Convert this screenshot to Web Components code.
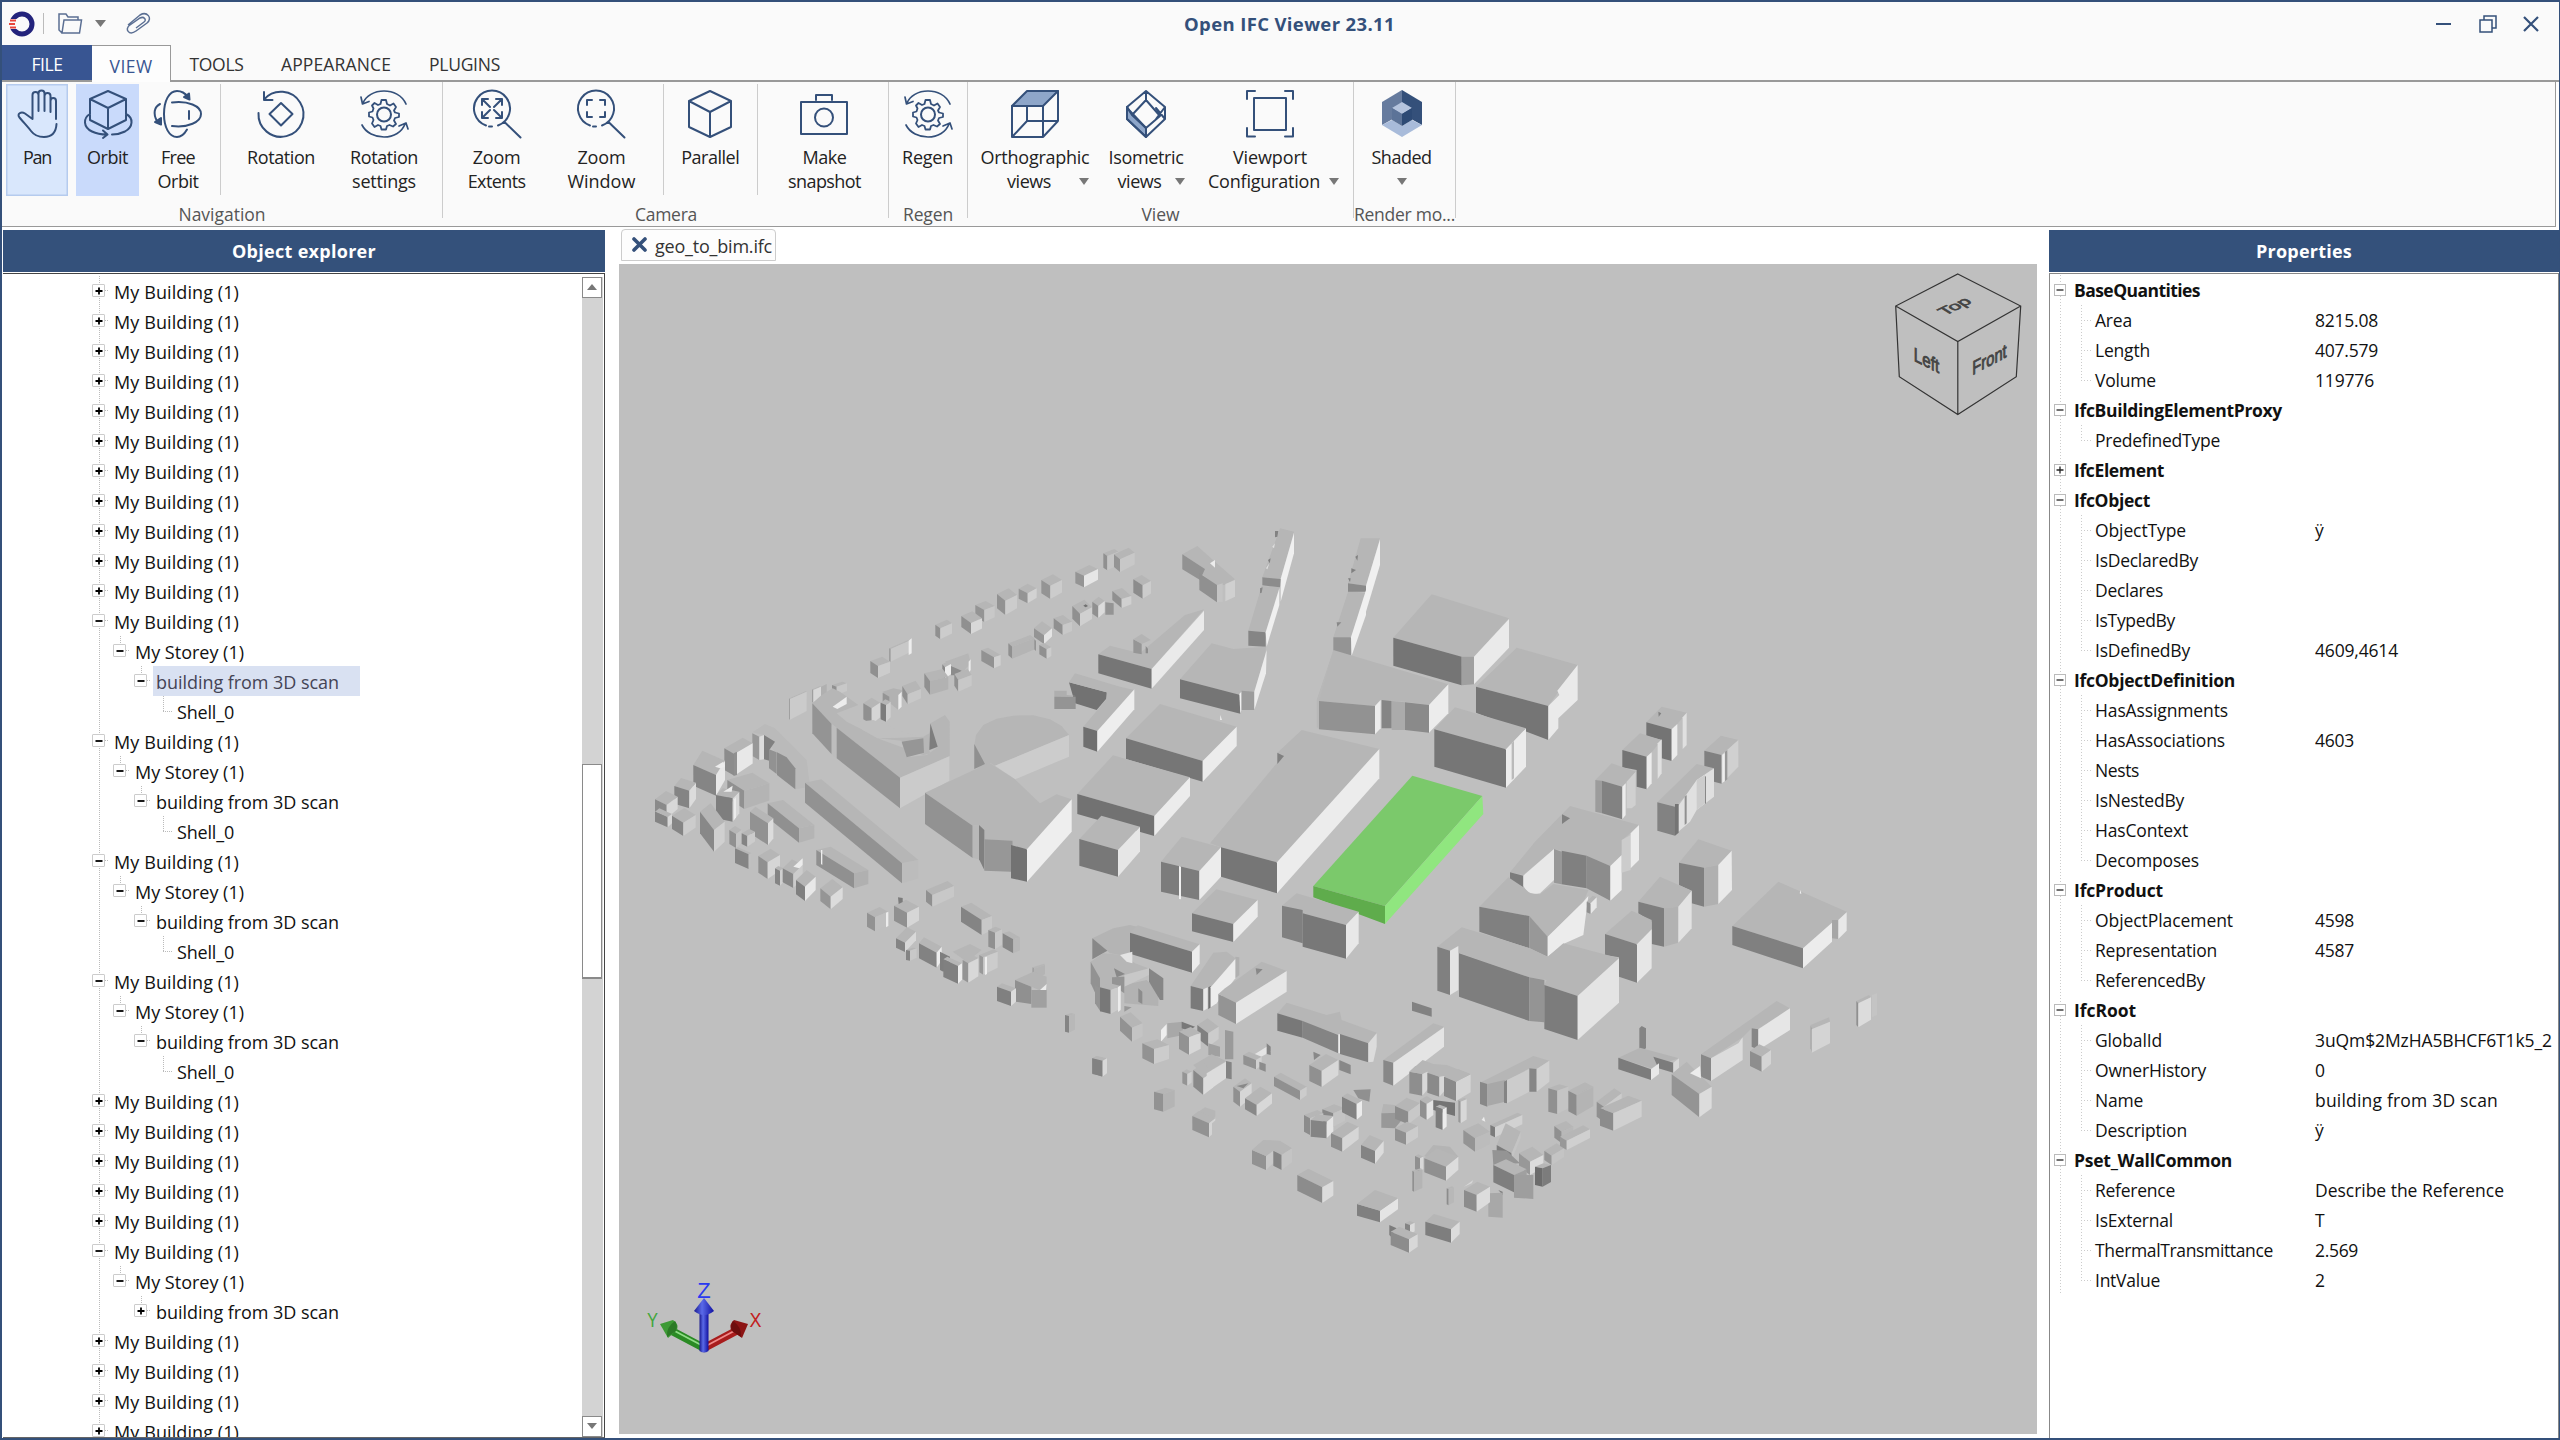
<!DOCTYPE html>
<html lang="en">
<head>
<meta charset="utf-8">
<title>Open IFC Viewer 23.11</title>
<style>
html,body{margin:0;height:100%;overflow:hidden}
body{font-family:"Open Sans","Noto Sans",sans-serif;font-size:18px;color:#222}
</style>
</head>
<body>
<ifc-app></ifc-app>
<script>
const pending=[];
function define(name,html,setup){
  const t=document.createElement('template');
  t.innerHTML=html;
  customElements.define(name,class extends HTMLElement{
    constructor(){super();this.attachShadow({mode:'open'});}
    connectedCallback(){
      if(this.ready)return;this.ready=true;
      this.shadowRoot.appendChild(t.content.cloneNode(true));
      if(setup)setup.call(this,this.shadowRoot);
    }
  });
}

/* Text run tracked to a given width */
define('ui-text','<style>:host{display:inline-block;white-space:pre}</style><slot></slot>',function(){pending.push(this);});

const ICONS={
hand:'<path d="M43 29V11c0-4-5.500-4-5.500 0V22M37.500 11V6c0-4-6-4-6 0V21M31.500 6V3.500c0-4-6-4-6 0V21M25.500 5c0-4-6-4-6 0V29L12 23.500C8 21 3.500 24 6.500 27.500C11 33 15 37 18 41C21 45 25 47 31 47C38 47 43 43 43.500 34"/>',
orbit:'<path d="M24 1L42 9V30L24 39L6 30V9ZM6 9L24 18L42 9M24 18V39M6 24C-1 28-1 37 8 41.500C12 43.500 17 44.500 23 44.500M19 40.500L23.500 44.500L19 48M42 24C50 28 49 37 41 41.500C37 43.500 32 44.500 28 44.500"/>',
free:'<path d="M34 7C31 3 27 1 23 1C15 1 10 11 10 24C10 37 15 47 23 47C28 47 31 43 33 39.500M18 12.500C34 10.500 47 16 47 24C47 32 34 38 18 36M6 14C0 17-1 24 3 31M35 21V29"/><path d="M30 7L35.500 9.500L35 3.500ZM1 32L7 34.500V28Z" fill="#34507a"/>',
rotation:'<path d="M7 9.500A22.500 22.500 0 1 1 1.500 23M7 2V10H15.500M24 13L35.500 24L24 35.500L12.500 24Z"/>',
gear:'<path stroke-width="1.700" d="M46 14C42 5 33 1 24 1C14 1 6 6 3 13M1 7L2.500 14L9 11.500M2 35C6 43 15 47 24 47C34 47 42 42 45 34M39 36L46 33L48 39"/><path stroke-width="1.800" d="M21.500 10H26L27 14L30 15.500L33.500 13.500L36 17L34 20.500L35 22.500L39 23.500V27L35 28L34 30.500L36 34L33 36.500L29.500 35L27 36L26 39.500H21.500L20.500 36L18 35L14.500 37L12 33.500L13.500 30L12.500 27.500L9 26.500V22.500L12.500 21.500L13.500 18.500L12 15.500L14.500 13L18 15L20.500 14Z"/><circle cx="24" cy="24.500" r="7"/>',
zext:'<path d="M13 35.500A18 18 0 1 1 25 35.500M16 36.500L19 36.500M31.500 32L47.500 47.500M9 15V9H15M23 9H29V15M9 22V28H15M23 28H29V22M9 9L17 17M29 9L21 17M9 28L17 20M29 28L21 20"/>',
zwin:'<path d="M13 35.500A18 18 0 1 1 25 35.500M16 36.500L19 36.500M31.500 32L47.500 47.500M10 15V10H15M23 10H28V15M10 22V27H15M23 27H28V22"/>',
cube:'<path d="M24 1L45 11V37L24 47L3 37V11ZM3 11L24 22L45 11M24 22V47"/>',
camera:'<path d="M1 12H47V44H1ZM16 10V5H32V10"/><circle cx="24" cy="27.500" r="9"/>',
ortho:'<path d="M1 16L16 1H47L32 16Z" fill="#8ea6c9"/><path d="M1 16H32V47H1ZM32 47L47 31V1M16 16V31L1 47M16 31H47"/>',
iso:'<path d="M5 17V29L24 47V38L7 20Z" fill="#8ea6c9"/><path d="M24 1L43 17V29L24 47L5 29V17ZM24 10L38 26L24 38L10 25ZM24 1V10M24 38V47M5 17L10 25M43 17L34 29M43 29L34 18"/>',
viewport:'<path d="M8 8H40V40H8ZM1 9V1H9M39 1H47V9M1 38V46.500H9M39 46.500H47V38"/>',
shaded:'<g stroke="none"><path d="M24 0L4 12V35L24 24Z" fill="#667b9e"/><path d="M24 0L44 12V35L24 24Z" fill="#34507a"/><path d="M4 35L14 30L24 36L34 30L44 35L24 47Z" fill="#a8bbda"/><path d="M14 18L24 12L34 18L24 24Z" fill="#b5c4de"/><path d="M14 18L24 24V36L14 30Z" fill="#5c7398"/><path d="M34 18L24 24V36L34 30Z" fill="#2d4a75"/></g>'
};
define('ui-icon','<style>:host{display:block;height:48px}svg{display:block;overflow:visible;fill:none;stroke:#34507a;stroke-width:2;stroke-linejoin:round;stroke-linecap:round}</style><svg width="48" height="48" viewBox="0 0 48 48"></svg>',function(r){
  r.querySelector('svg').innerHTML=ICONS[this.getAttribute('name')];
});

/* Title bar */
define('title-bar',`<style>
:host{display:flex;height:43px;flex:none;align-items:center;background:#fafafa}
svg{display:block;overflow:visible}
.left{display:flex;align-items:center;width:1182px;height:100%}
.sep{width:1px;height:21px;background:#bbb;margin:0 14px 0 8px}
.t{font-weight:700;color:#34507a;font-size:18.500px;flex:1}
.win{display:flex;gap:27px;margin-right:21px;align-items:center}
</style>
<div class="left"><svg style="margin-left:7px" width="26" height="26" viewBox="0 0 26 26"><ellipse cx="13" cy="13" rx="10" ry="10" fill="none" stroke="#23237c" stroke-width="5"/><path d="M0 8H8V18H0Z" fill="#fafafa"/><path d="M1 9.500H7M0 13H6M1 16.500H7" stroke="#e8453c" stroke-width="2.200"/></svg>
<div class="sep"></div>
<svg width="24" height="21" viewBox="0 0 24 21" fill="none" stroke="#5b6f93" stroke-width="1.500"><path d="M4 20L1 17V1H8L10 4H20V7M4 20L6 7H23.500L21.500 20Z"/></svg>
<svg style="margin-left:13px" width="11" height="7"><path d="M0 0H11L5.500 7Z" fill="#777"/></svg>
<svg style="margin-left:20px" width="25" height="21" viewBox="0 0 25 21" fill="none" stroke="#5b6f93" stroke-width="1.500"><path d="M2 12L14 2C21-2 27 5 21 10L10 18C3 23-2 16 4 12L14 5C18 3 21 7 18 9L10 15"/></svg></div>
<ui-text class="t" w="211">Open IFC Viewer 23.11</ui-text>
<div class="win"><svg width="16" height="16" stroke="#34507a" stroke-width="2"><path d="M0 8H15"/></svg>
<svg width="18" height="18" stroke="#34507a" stroke-width="1.500" fill="none"><path d="M1 5H13V17H1ZM5 5V1H17V13H13"/></svg>
<svg width="14" height="14" stroke="#34507a" stroke-width="2.200"><path d="M0 0L14 14M14 0L0 14"/></svg></div>`);

define('menu-tabs',`<style>
:host{display:flex;height:35px;flex:none;background:#fafafa;border-bottom:2px solid #999;font-size:17.500px;color:#333}
div{display:flex;align-items:center;justify-content:center;height:35px;padding-top:3px;box-sizing:border-box}
.f{width:90px;background:#385592;color:#fff}
.v{width:79px;height:37px;background:#fdfdfd;border:1px solid #999;border-bottom:0;border-left:0;color:#385592}
</style><div class="f"><ui-text w="31">FILE</ui-text></div><div class="v"><ui-text w="43">VIEW</ui-text></div>
<div style="width:91px"><ui-text w="54">TOOLS</ui-text></div><div style="width:148px"><ui-text w="110">APPEARANCE</ui-text></div><div style="width:109px"><ui-text w="71">PLUGINS</ui-text></div>`);

define('ribbon-button',`<style>
:host{display:flex;flex-direction:column;align-items:center;height:112px;box-sizing:border-box;padding-top:6px;font-size:18px}
:host([hot]){background:#d9e7fc;box-shadow:inset 0 0 0 1.500px #b5cbee}
:host([on]){background:#c9dafb}
.a{display:flex;flex-direction:column;align-items:center;margin-top:7px}
.line{display:flex;align-items:center;justify-content:center;height:24px;line-height:24px;white-space:pre}
</style><div class="i"></div><div class="a"></div>`,function(r){
  const g=n=>this.getAttribute(n);
  this.style.width=g('width')+'px';
  r.querySelector('.i').innerHTML=`<ui-icon name="${g('icon')}"></ui-icon>`;
  const tri='<svg width="10" height="7"><path d="M0 0H10L5 7Z" fill="#777"/></svg>';
  let h='';
  g('label').split('|').forEach((p,i)=>{
    const [s,w]=p.split(':');
    const drop=i==1&&g('drop');
    const [pl,gap]=drop?drop.split(','):[0,0];
    h+=`<div class="line" style="padding-left:${pl}px;gap:${gap}px">${s?`<ui-text w="${w}">${s}</ui-text>`:''}${drop?tri:''}</div>`;
  });
  r.querySelector('.a').innerHTML=h;
});

define('ribbon-group',`<style>
:host{display:flex;flex-direction:column;box-sizing:border-box;height:136px;border-right:1px solid #ccc;flex:none}
.row{display:flex;height:114px;padding-top:2px;box-sizing:border-box}
.cap{height:22px;line-height:22px;padding-top:7px;text-align:center;color:#555;font-size:17.500px;white-space:nowrap}
</style><div class="row"><slot></slot></div><div class="cap"></div>`,function(r){
  this.style.width=this.getAttribute('width')+'px';
  const [s,w]=this.getAttribute('caption').split(':');
  r.querySelector('.cap').innerHTML=`<ui-text w="${w}">${s}</ui-text>`;
});

define('ribbon-bar',`<style>
:host{display:flex;height:143.500px;flex:none;background:#fafafa;border-bottom:1.500px solid #999;border-right:1px solid #999;margin-right:3px}
.s{width:1px;height:111px;background:#ccc}
</style>
<ribbon-group width="441" caption="Navigation:87">
<ribbon-button style="margin-left:4px" hot width="62" icon="hand" label="Pan:28"></ribbon-button>
<ribbon-button style="margin-left:8px" on width="63" icon="orbit" label="Orbit:41"></ribbon-button>
<ribbon-button width="78" icon="free" label="Free:34|Orbit:41"></ribbon-button><div class="s" style="margin-left:3px"></div>
<ribbon-button width="120" icon="rotation" label="Rotation:68"></ribbon-button>
<ribbon-button width="86" icon="gear" label="Rotation:68|settings:64"></ribbon-button></ribbon-group>
<ribbon-group width="446" caption="Camera:62" style="padding-left:1px">
<ribbon-button width="106" icon="zext" label="Zoom:48|Extents:58"></ribbon-button>
<ribbon-button width="105" icon="zwin" label="Zoom:48|Window:68"></ribbon-button><div class="s" style="margin-left:9px"></div>
<ribbon-button width="94" icon="cube" label="Parallel:58"></ribbon-button><div class="s"></div>
<ribbon-button width="128" style="margin-left:3px" icon="camera" label="Make:44|snapshot:73"></ribbon-button></ribbon-group>
<ribbon-group width="79" caption="Regen:50"><ribbon-button width="77" icon="gear" label="Regen:51"></ribbon-button></ribbon-group>
<ribbon-group width="386" caption="View:38">
<ribbon-button width="134" icon="ortho" drop="26,28" label="Orthographic:109|views:44"></ribbon-button>
<ribbon-button width="88" icon="iso" drop="10,13" label="Isometric:75|views:44"></ribbon-button>
<ribbon-button width="160" icon="viewport" drop="7,9" label="Viewport:74|Configuration:112"></ribbon-button></ribbon-group>
<ribbon-group width="102" caption="Render mo...:101"><ribbon-button width="95" icon="shaded" drop="0,0" label="Shaded:60|"></ribbon-button></ribbon-group>`);

define('panel-head',`<style>:host{display:flex;height:42px;background:#34517b;color:#fff;font-weight:700;font-size:18px;align-items:center;justify-content:center;flex:none;box-sizing:border-box;padding-top:1px}</style><slot></slot>`);

/* Object tree */
define('tree-row',`<style>
:host{display:flex;height:30px;align-items:center;color:#111;flex:none}
.in{flex:none;height:30px}
.box{width:13px;height:13px;border:1.500px solid #ccc;box-sizing:border-box;border-radius:1px;background:#fff;display:flex;align-items:center;justify-content:center}
.box svg{display:block}
.gap{width:3px}.d{width:3px;height:0;border-top:1px dotted #bbb}
.txt{height:30px;display:flex;align-items:center;padding:2px 0 0 3px;box-sizing:border-box}
.sel{background:#d9e1f2;color:#445;width:207px}
</style><div class="in"></div><div class="box"></div><div class="d"></div><div class="gap"></div><div class="txt"></div>`,function(r){
  const k=this.getAttribute('k');
  const lv={B:0,b:0,T:1,S:2,s:2,x:2,h:3}[k];
  const [t,w]=[['My Building (1)',125],['My Storey (1)',109],['building from 3D scan',183],['Shell_0',57]][lv];
  const cx=[99,120,141,162][lv],box=r.querySelector('.box');
  r.querySelector('.in').style.width=(cx-7)+'px';
  const g='repeating-linear-gradient(#bbb 0 1px,#fff0 1px 2px)';
  let bg=g+' 99px 0/1px 100% no-repeat';
  if(lv==1||lv==2)bg+=`,${g} ${cx}px 0/1px 9px no-repeat`;
  if(lv==3)bg+=`,${g} 163px 0/1px 15px no-repeat,repeating-linear-gradient(90deg,#bbb 0 1px,#fff0 1px 2px) 163px 15px/10px 1px no-repeat`;
  this.style.background=bg;
  if(lv==3){box.style.visibility='hidden';r.querySelector('.d').style.visibility='hidden';}
  const plus=k=='b'||k=='x';
  box.innerHTML=`<svg width="8" height="8" stroke="#000" stroke-width="1.800"><path d="M0.500 4H7.500${plus?'M4 0.500V7.500':''}"/></svg>`;
  const x=r.querySelector('.txt');
  if(k=='S')x.classList.add('sel');
  x.innerHTML=`<ui-text w="${w}">${t}</ui-text>`;
});

define('scroll-bar',`<style>
:host{display:flex;flex-direction:column;width:22px;background:linear-gradient(90deg,#d3d3d3 21px,#fff 21px);flex:none;margin-top:3px;height:1160px}
.b{height:21px;width:20px;background:#fff;border:1px solid #8a8a8a;box-sizing:border-box;display:flex;align-items:center;justify-content:center;flex:none}
.th{height:215px;background:#fff;border:1px solid #8a8a8a;border-bottom-width:2px;box-sizing:border-box;width:20px}
</style><div class="b"><svg width="10" height="6"><path d="M0 6H10L5 0Z" fill="#777"/></svg></div><div style="height:466px"></div><div class="th"></div><div style="flex:1"></div><div class="b"><svg width="10" height="6"><path d="M0 0H10L5 6Z" fill="#777"/></svg></div>`);

define('object-explorer',`<style>
:host{display:flex;flex-direction:column;width:602px;height:1208px;flex:none}
.body{display:flex;margin-top:1px;border-top:1px solid #444;border-right:1.500px solid #444;border-bottom:1px solid #666;height:1165px;box-sizing:border-box;background:#fff;overflow:hidden}
.tree{flex:1;display:flex;flex-direction:column;padding-top:2px;margin-left:-3px;overflow:hidden}
</style><panel-head><ui-text w="144">Object explorer</ui-text></panel-head><div class="body"><div class="tree"></div><scroll-bar></scroll-bar></div>`,function(r){
  r.querySelector('.tree').innerHTML=[...'bbbbbbbbbbbBTShBTshBTshBTshbbbbbBTxbbbb'].map(k=>`<tree-row k="${k}"></tree-row>`).join('');
});

/* Property grid */
define('property-row',`<style>
:host{display:flex;height:30px;align-items:center;color:#111;flex:none;font-size:17.500px}
.l{display:flex;align-items:center;flex:none;height:30px;width:265px}
.box{width:12px;height:12px;border:1px solid #bbb;box-sizing:border-box;background:#fff;margin-left:4px;display:flex;align-items:center;justify-content:center}
b,ui-text{display:block}
ui-text{padding-top:1px}
</style><div class="l"></div><div class="v"></div>`,function(r){
  const [n,w,v,vw]=this.getAttribute('d').split(':'),last=this.hasAttribute('last');
  const g='repeating-linear-gradient(#ccc 0 1px,#fff0 1px 3px)';
  let bg=`${g} 10px 0/1px 100% no-repeat`,L=r.querySelector('.l');
  if(/^[-+]/.test(n)){
    L.innerHTML=`<div class="box"><svg width="8" height="8" stroke="#222" stroke-width="1.300"><path d="M0.500 4H7.500${n[0]=='+'?'M4 0.500V7.500':''}"/></svg></div><b style="margin-left:8px"><ui-text w="${w}">${n.slice(1)}</ui-text></b>`;
  }else{
    bg+=`,${g} 31px 0/1px ${last?'50%':'100%'} no-repeat,repeating-linear-gradient(90deg,#ccc 0 1px,#fff0 1px 3px) 31px 15px/10px 1px no-repeat`;
    L.innerHTML=`<div style="width:45px"></div><ui-text w="${w}">${n}</ui-text>`;
    if(v)r.querySelector('.v').innerHTML=`<ui-text w="${vw}">${v}</ui-text>`;
  }
  this.style.background=bg;
});
define('properties-panel',`<style>
:host{display:flex;flex-direction:column;width:510px;height:1208px;flex:none}
.body{flex:1;margin-top:1px;border:1px solid #888;border-bottom:0;box-sizing:border-box;background:#fff;display:flex;flex-direction:column;padding-top:1px;overflow:hidden}
</style><panel-head><ui-text w="96">Properties</ui-text></panel-head><div class="body"></div>`,function(r){
  const d=['-BaseQuantities:126','Area:37:8215.08:63','Length:55:407.579:63','Volume:61:119776:59','-IfcBuildingElementProxy:208','PredefinedType:125','+IfcElement:90','-IfcObject:76','ObjectType:91:ÿ:9','IsDeclaredBy:103','Declares:68','IsTypedBy:80','IsDefinedBy:95:4609,4614:83','-IfcObjectDefinition:161','HasAssignments:133','HasAssociations:130:4603:39','Nests:44','IsNestedBy:89','HasContext:93','Decomposes:104','-IfcProduct:89','ObjectPlacement:138:4598:39','Representation:122:4587:39','ReferencedBy:110','-IfcRoot:62','GlobalId:67:3uQm$2MzHA5BHCF6T1k5_2:237','OwnerHistory:111:0:9','Name:48:building from 3D scan:183','Description:92:ÿ:9','-Pset_WallCommon:158','Reference:80:Describe the Reference:189','IsExternal:78:T:9','ThermalTransmittance:178:2.569:43','IntValue:65:2:9'];
  r.querySelector('.body').innerHTML=d.map((s,i)=>`<property-row d="${s}" ${!d[i+1]||/^[-+]/.test(d[i+1])?'last':''}></property-row>`).join('');
});

/* City model. "q" lines are boxes: left, front and right roof corners, height, left and right wall grey.
   "p" lines are free polygons: grey followed by points. */
const CITY={
'640,520':`
q 1390 100 1402 108 1435 95 43 90 c5
q 1422 103 1440 118 1484 98 38 94 c8
q 1306 155 1332 167 1374 147 35 94 e6
q 1204 180 1231 197 1266 180 40 94 cc
q 1136 206 1163 220 1190 205 30 94 d2
q 1071 222 1096 242 1131 225 43 92 cc
q 1006 255 1033 270 1064 258 36 94 c8
q 964 288 993 309 1026 295 33 90 d8
q 886 314 901 325 936 310 33 90 cc
q 748 385 752 387 808 362 38 90 c8
p ee 806 362 815 355 815 400 806 405
q 691 423 714 438 750 425 36 90 cc
q 1480 178 1508 196 1533 183 40 8c cc
q 1417 213 1445 237 1474 228 27 90 d0
p 94 1396 247 1421 250 1421 284 1396 284
q 1357 245 1375 258 1394 243 36 90 dc
q 1297 258 1320 281 1356 262 38 90 d0
p 70 1330 257 1337 253 1344 258 1337 262
q 1241 295 1268 315 1296 305 30 90 c8
p 94 1179 355 1188 362 1188 393 1179 385
q 1182 325 1212 346 1236 325 26 94 e4
q 1198 375 1220 388 1234 382 28 90 cc
q 1105 370 1117 380 1183 355 36 90 b4
q 1024 390 1062 412 1082 405 33 92 d0
p b6 915 425 985 400 992 430 965 460 933 435
p ec 986 425 992 418 992 450 986 458
q 907 433 915 442 933 432 33 88 ec
p 8c 933 438 965 452 948 466 933 466
q 943 462 955 480 995 465 35 90 c8
q 853 460 870 483 925 470 41 90 b2
p b2 728 515 760 505 785 510 785 560 775 570 750 550
p 94 728 518 748 530 748 560 728 545
p ec 775 525 785 515 785 560 775 570
q 787 498 803 523 843 507 30 90 c8
q 670 550 695 565 720 548 48 90 d6
q 722 548 738 555 752 545 50 7c d0
q 576 495 590 500 621 490 25 90 c8
q 448 535 450 537 500 515 62 90 cb
p b0 543 500 560 492 560 530 543 540
q 517 508 520 510 543 500 38 90 d8
p b6 517 550 545 525 578 505 600 515 655 555 590 580 620 605 650 620 720 655 850 650 868 640 872 610 915 585 929 605 929 708 780 773 590 623 575 612
p ec 578 560 620 530 620 552 592 567
p bf 655 605 700 600 800 640 850 650 712 655 668 630
p bf 712 655 785 662 800 712 860 705 895 680 868 690 870 700 850 705
p 96 785 665 850 655 852 698 800 712
p 7e 871 610 893 680 868 690
p 94 517 550 575 612 575 703 517 640
p bd 575 612 590 623 588 715 575 703
p 94 590 623 780 773 780 865 590 715
p cb 780 773 928 709 928 782 780 865
p ba 337 637 375 612 405 625 430 650 500 720 510 800 466 808 465 745 430 710 400 690 372 645
p 98 337 640 358 650 358 720 337 708
p dd 358 650 372 645 372 718 358 720
p 80 372 645 405 665 388 690 388 722 372 718
p 92 387 688 410 697 410 762 387 745
p 8c 411 697 440 712 466 745 466 808 411 765
q 253 685 283 702 338 670 65 8c e8
p 90 281 700 291 695 291 765 281 768
q 160 735 228 765 255 722 62 85 e8
p ec 225 740 250 725 255 740 240 745
q 103 798 148 812 168 788 53 84 dc
q 45 838 80 855 113 830 40 8a d8
q 45 875 83 892 96 882 30 84 d8
q 96 887 130 908 167 885 40 85 cc
q 262 780 313 812 388 790 55 90 b4
q 228 825 278 835 298 815 70 7e d8
p ec 282 838 288 832 288 892 282 900
p ec 250 815 278 797 275 815
q 180 875 222 930 254 905 65 88 d0
q 383 850 477 925 523 915 43 90 b4
q 495 788 786 1030 835 1020 60 92 bc
q 330 875 384 910 400 895 65 92 dc
q 268 930 288 942 305 930 42 90 c4
q 305 940 322 948 345 935 32 84 cc
q 285 985 326 1003 335 1000 44 84 c0
q 355 1008 383 1027 420 1005 50 90 d6
q 405 1045 420 1052 430 1045 45 84 d0
q 428 1045 460 1062 488 1035 42 88 cc
p ec 460 1040 488 1015 488 1035 478 1045
q 468 1080 495 1100 527 1070 43 80 e8
q 529 990 642 1060 685 1050 45 90 b0
p ee 543 990 547 990 547 1035 543 1032
q 541 1105 572 1130 608 1102 38 95 dc
q 858 1110 877 1125 942 1098 35 90 c8
p b6 1003 675 1008 645 1030 615 1070 596 1120 587 1180 586 1230 598 1265 618 1287 645 1065 737 1050 728 1035 740 1003 745
p cc 1065 737 1287 645 1287 710 1125 778
p 90 1003 672 1035 732 1003 747
p b6 855 818 1048 728 1125 778 1200 850 1250 823 1295 838 1161 987 1113 977 1120 962 1033 958 1017 915 998 917
p 92 855 818 998 917 998 1014 855 912
p b8 998 917 1017 915 1017 1018 998 1014
p 80 1017 915 1033 930 1033 1050 1017 1018
p 97 1033 958 1118 962 1113 1055 1033 1052
p 72 1113 975 1161 988 1161 1085 1113 1075
p ee 1161 988 1295 838 1295 935 1161 1085
p 72 1287 487 1405 518 1400 535 1370 570 1305 550
p b6 1287 487 1305 460 1440 500 1483 510 1372 633 1330 620 1398 540 1400 517
p 70 1330 620 1372 633 1372 695 1330 680
p ee 1372 633 1483 508 1483 568 1372 695
p ae 1243 512 1280 512 1280 525 1307 528 1243 530
p 94 1243 530 1307 530 1307 567 1243 567
`,
'1120,500':`
p b6 -65 463 -30 437 60 460 195 345 252 328 95 507
p 96 40 418 65 430 65 463 40 458
p b4 40 418 65 402 92 420 65 432
p 8c 77 438 84 446 84 460 77 460
p 76 -65 463 95 507 95 566 -65 520
p ea 95 507 252 332 252 390 95 566
p b6 187 163 232 138 285 185 345 238 315 255 290 255 240 218 255 207
p 92 187 163 255 207 240 240 187 208
p 90 238 220 291 255 291 307 238 270
p c4 291 255 308 250 308 305 291 307
p d0 316 252 345 240 345 290 316 304
p ec 270 190 285 180 285 203
p b6 427 232 480 85 522 95 482 237
p 82 465 93 475 93 472 110 465 112
p e0 457 140 465 130 462 145
p 80 444 180 452 175 449 190
p e0 438 205 448 190 442 208
p f0 482 237 522 98 522 160 482 305
p b6 385 392 425 258 478 262 437 397
p 8c 427 232 482 237 480 262 427 256
p 85 385 392 437 397 437 440 385 437
p f0 437 397 478 265 478 315 440 440
p 88 420 265 428 262 425 278 420 280
p b6 180 538 275 430 340 447 438 440 435 470 402 575 365 575 358 585
p 75 180 538 361 585 361 641 180 595
p f0 358 582 364 575 364 630 361 641
p 9c 365 572 403 575 403 630 365 630
p ec 403 575 440 450 438 520 403 630
p b6 684 250 722 115 780 115 738 257
p 80 694 205 708 210 694 220
p 80 706 170 714 165 712 182
p 80 684 235 692 235 690 246
p f0 738 257 780 118 780 195 735 345
p b6 640 412 685 272 738 280 693 412
p 8a 684 250 738 257 738 275 684 275
p 88 650 367 664 367 652 380
p 94 640 412 693 412 693 467 640 455
p f0 693 412 738 270 738 345 695 467
p b6 820 413 935 283 1167 355 1062 470 1025 470
p 75 820 413 1025 470 1025 556 820 497
p a0 1025 470 1062 470 1062 553 1025 556
p ea 1062 470 1167 357 1167 443 1062 553
p b6 1068 560 1190 443 1373 495 1285 618
p 75 1068 560 1285 618 1285 720 1068 638
p ea 1285 618 1318 585 1312 572 1373 495 1373 600 1315 655 1315 685 1285 720
p b8 590 600 640 450 597 688 590 680
p b6 597 603 640 450 985 553 927 615 855 605 780 600 765 618
p 92 597 603 765 618 765 703 597 688
p ec 765 618 782 600 782 685 765 703
p 85 785 600 815 603 815 685 785 685
p ab 815 603 855 607 855 690 815 690
p 8a 855 607 927 615 927 698 855 690
p ec 927 615 985 553 985 640 927 698
p b6 943 688 1005 622 1218 685 1158 748
p 76 943 688 1158 748 1158 863 943 800
p ec 1158 748 1218 685 1218 800 1158 863
p ba 1175 730 1182 722 1182 835 1175 840
q 18 715 248 783 350 680 62 76 ec
p ec 301 645 306 660 300 660
q -128 882 103 948 210 832 60 72 ec
q -122 1017 -6 1050 60 980 80 78 e6
p b6 303 1042 270 1030 470 790 490 765 472 758 545 690 778 747 471 1087
p 76 303 1042 471 1087 471 1180 303 1130
p ec 471 1087 778 747 778 835 471 1180
p 80 472 758 492 768 472 792
p b6 123 1085 185 1010 303 1042 238 1113
p 7c 123 1085 238 1113 238 1200 123 1175
p f0 177 1098 183 1100 183 1198 177 1197
p ec 238 1113 303 1042 303 1130 238 1200
P #7bc96b 580 1158 877 827 1087 888 795 1218
P #5fac4c 580 1158 795 1218 795 1272 580 1192
P #90e67f 795 1218 1087 888 1090 942 795 1272
`,
'1440,680':`
p b6 619 127 665 80 740 98 712 132 695 148
p 74 619 127 695 148 695 243 665 235 665 180 619 168
p ec 695 148 712 132 712 225 695 243
p e0 728 112 740 98 740 195 728 207
p 80 655 95 664 100 656 110
p b6 547 210 600 160 665 180 635 217 620 230
p 74 547 210 620 230 620 328 590 320 590 270 547 262
p ec 620 230 635 217 635 310 620 328
p e0 653 190 665 178 665 280 653 297
p b6 466 300 515 250 587 275 557 310 547 320 486 302
p 9c 466 300 486 302 486 400 466 395
p 82 486 302 547 320 547 418 486 400
p ec 547 320 557 310 557 405 547 418
p d0 560 305 587 275 587 375 575 385 560 385
q 793 212 845 225 895 180 86 80 d0
p ee 847 225 854 220 854 304 847 308
p 98 855 215 862 210 862 298 855 304
p b6 652 367 770 252 822 265 705 380
p 82 652 367 705 380 705 467 652 452
p e0 715 378 770 300 822 265 822 350 770 390 750 425 715 455
p 74 705 372 716 372 716 458 705 467
p 90 734 350 740 345 740 430 734 435
p 88 795 290 798 288 798 370 795 372
p cc 770 300 795 285 795 370 770 390
p b6 210 577 285 485 390 378 597 435 548 480 545 525 511 558 440 527 365 512 342 507 250 585
p 80 366 403 390 415 366 432
p 7c 210 577 250 587 250 622 210 603
p e8 250 587 342 507 342 600 300 640 282 643 262 635 250 618
p 98 342 507 365 515 365 613 342 608
p 80 365 512 440 527 440 625 365 613
p 8c 440 527 511 558 511 662 440 625
p ee 511 558 545 525 545 630 511 662
p cc 545 480 572 465 572 570 545 578
p ec 572 460 597 435 597 540 572 565
p b6 118 680 205 592 250 622 270 640 300 643 340 612 445 630 430 668 323 770 268 708
p 80 118 680 268 708 268 805 118 755
p 98 268 708 323 770 323 830 268 805
p ec 323 770 430 665 445 648 430 765 375 790 323 830
q 440 665 452 670 470 652 32 90 e8
p b6 717 548 775 478 875 512 835 555 792 563
p 80 717 548 792 563 792 680 755 670 755 632 717 615
p b0 792 563 835 555 835 672 792 680
p ea 835 555 875 512 876 630 835 672
p b6 595 665 660 590 755 632 715 680 672 685
p 7e 595 665 672 685 672 800 635 792 635 725 595 700
p b2 672 685 715 680 715 788 672 800
p e2 715 680 755 632 755 745 715 788
p b6 495 762 575 692 635 720 635 750 591 793
p 80 495 762 591 793 591 908 537 890 537 832 495 825
p e6 591 793 635 748 635 865 591 908
p b6 877 738 1015 605 1220 695 1195 720 1176 728 1089 805
p 80 877 738 1089 805 1089 865 877 795
p ec 1089 805 1176 728 1176 785 1089 865
p a6 1176 720 1195 720 1195 777 1176 775
p e8 1195 720 1220 697 1220 752 1195 777
p f0 1079 640 1082 630 1084 642
p b6 -8 800 65 742 270 805 323 830 370 790 537 835 413 948 313 915 320 900 268 892 60 820 30 812
p 80 -8 800 30 812 30 945 -8 932
p e4 30 812 55 798 55 930 30 945
p 7e 57 820 268 892 268 1023 57 950
p 94 268 892 313 900 313 1027 268 1023
p 7c 313 915 413 948 413 1080 313 1047
p e4 413 948 537 835 537 968 413 1080
p 84 598 1045 605 1038 618 1045 618 1105 598 1115
p b4 535 1133 600 1103 717 1135 657 1155 633 1165
p 7c 640 1130 700 1148 700 1178 655 1165
p d8 700 1148 717 1135 717 1163 700 1178
p 7c 535 1133 633 1168 633 1200 535 1168
p e8 633 1168 657 1150 657 1182 633 1200
p b6 783 1123 1010 963 1050 985 955 1047 935 1045 908 1072 813 1135
p 88 783 1123 813 1135 813 1203 783 1190
p dc 813 1135 895 1090 908 1072 908 1140 813 1203
p 86 935 1045 955 1048 955 1110 935 1100
p e6 955 1048 1050 985 1050 1050 955 1110
q 930 1113 965 1130 993 1110 45 8e d4
q 1112 1035 1115 1048 1170 1025 70 90 d4
q 1249 963 1255 970 1293 952 72 90 dc
p c4 1296 945 1311 940 1311 1005 1296 1012
p b6 695 1183 740 1145 815 1220 778 1242
p ec 750 1180 780 1158 783 1195
p 94 695 1183 778 1242 778 1312 695 1245
p dc 778 1242 815 1220 815 1285 778 1312
`,
'820,880':`
q 141 98 165 112 203 95 42 92 c0
p ec 198 98 205 95 205 138 198 142
q 222 77 261 98 297 80 45 90 d6
p 7c 234 52 248 54 248 66 236 72
q 228 175 255 188 288 155 28 84 d8
q 258 210 270 212 290 205 30 84 c8
q 423 80 485 120 516 108 45 84 c8
q 505 150 525 158 546 148 50 90 c8
q 548 160 580 178 600 172 42 86 b8
q 297 190 350 218 365 200 45 82 ec
p 7e 360 215 390 230 390 250 370 275 360 270
p b6 398 215 450 192 485 210 440 245
q 428 240 445 250 475 235 58 94 d8
q 370 238 414 258 426 250 53 80 ec
q 478 225 490 232 533 215 52 98 cc
p ee 495 232 501 230 501 282 495 285
q 638 262 641 266 675 255 30 84 b4
p b4 585 300 640 275 680 290 680 318 662 332 634 320
p 90 585 300 634 320 634 372 585 365
p a0 634 330 680 330 680 383 634 383
p ec 660 330 680 312 678 330
q 531 320 573 335 588 325 43 80 dc
q 735 405 747 408 765 402 50 84 b8
q 817 535 847 545 860 538 45 82 d8
`,
'1080,900':`
p b4 37 115 100 85 150 75 230 95 150 120 150 170 90 160
p 88 37 115 82 152 37 178
q 150 98 336 155 359 133 63 76 ec
p b6 32 185 70 160 130 165 165 190 205 205 125 250 60 262
p e4 120 165 157 155 157 190 140 185
p 92 32 185 60 235 60 310 32 250
p 94 45 255 62 265 62 335 45 310
p b2 133 255 200 240 235 275 235 318 133 310
p c8 133 225 207 205 207 225 133 260
p 88 102 205 135 222 110 232
p 94 96 232 133 230 133 280 96 255
p 86 207 205 250 235 250 300 240 300 207 245
p 8c 175 265 187 275 187 312 175 305
q 60 262 92 270 122 258 72 78 cc
p ec 114 262 122 256 122 330 114 336
p 98 133 318 155 322 133 335
q 120 350 156 383 188 370 42 92 c4
q 37 475 68 482 81 475 47 82 d8
p b6 332 258 400 158 440 155 466 175 393 262 368 268
p b0 466 170 478 172 478 225 466 235
p 7a 332 258 370 268 370 333 332 325
p e8 370 268 383 262 383 325 370 333
p 70 385 262 392 258 392 322 385 328
p ec 392 262 466 177 466 235 410 310 392 322
p b6 415 282 435 265 545 185 620 213 468 308
p 94 415 282 468 308 468 372 415 345
p e6 468 308 620 213 620 275 468 372
p 88 527 205 548 208 530 225
q 336 40 460 72 533 0 54 78 ec
p b6 606 17 650 -20 836 35 798 75 668 40
p 80 606 17 668 30 668 130 606 112
p 78 668 40 798 75 798 176 668 140
p e8 798 75 836 35 836 130 798 176
p b6 592 340 620 308 740 345 780 335 785 360 890 398 865 430 780 405 668 365
p 78 592 340 668 363 668 413 592 392
p 84 668 363 775 405 775 460 668 413
p ec 775 403 780 403 780 460 775 460
p 80 780 402 865 430 865 487 780 462
p dc 865 430 890 400 890 440 880 485 865 487
p 82 996 305 1055 325 1055 350 996 332
p b6 910 480 1060 370 1092 380 945 487
p 88 910 480 940 488 940 557 910 545
p e4 940 488 1092 382 1092 440 940 557
p a8 262 370 310 365 310 405 262 415
p ee 243 390 260 372 260 405 243 425
q 187 430 222 447 267 435 45 92 cc
q 352 375 385 400 416 380 40 80 cc
p 78 305 365 345 380 325 392 305 385
q 297 395 327 412 362 398 52 92 d8
p a0 385 430 420 440 420 470 385 465
p 9a 435 390 460 395 460 478 435 478
p 84 438 483 455 487 455 538 438 535
p b6 340 495 395 463 438 483 370 525
q 340 510 370 535 400 515 50 88 dc
p dc 380 520 438 485 438 535 380 575
q 307 515 322 522 335 515 35 94 d0
q 222 575 250 582 284 570 53 92 b4
p b6 337 648 375 622 406 632 406 650 387 668
q 337 648 387 670 406 655 42 92 d4
p bf 396 670 408 660 408 700 396 705
q 460 560 480 575 515 550 45 90 d6
p 88 470 558 505 550 490 565
q 495 595 530 615 576 580 33 88 d8
p e4 520 465 560 440 572 455 525 480
p 84 560 430 572 440 572 465 560 462
q 490 465 528 480 545 470 28 92 d0
p 8c 538 485 557 492 557 515 538 508
q 582 530 660 572 680 560 28 90 cc
p 88 700 455 722 465 702 480
q 688 495 725 513 775 480 48 90 d8
p 88 778 480 812 495 812 523 778 510
q 516 750 558 768 580 750 42 92 c8
q 580 752 605 765 636 745 45 84 c4
p b6 516 750 550 720 600 722 636 745 606 758 580 752 558 768
q 652 825 727 862 760 843 47 8c dc
q 831 912 900 932 954 895 35 80 e4
p b6 831 912 885 870 954 895 900 932
p 7c 928 975 950 985 935 1012 928 1005
q 975 970 990 975 1004 968 28 84 dc
q 932 995 987 1018 1013 1003 40 8c d8
q 1036 965 1113 988 1139 965 40 7e dc
q 843 735 885 753 911 723 38 84 dc
q 727 628 760 640 795 625 40 88 c4
q 672 645 690 655 730 640 50 8c c4
q 692 660 740 665 760 648 50 84 e4
q 753 700 787 715 836 680 40 8c d6
p 90 820 570 872 568 868 605 835 595
q 786 590 830 612 846 602 47 82 ec
p b4 904 640 910 612 945 615 970 640
p 98 904 640 965 638 965 660 945 685 904 683
q 945 618 985 635 1020 610 38 8c c8
q 945 685 978 698 1014 678 36 90 cc
q 1020 600 1040 612 1060 600 48 90 e4
p 74 1060 600 1125 608 1125 648 1060 630
q 1067 620 1088 628 1100 622 62 7c ec
q 1135 600 1142 605 1160 598 65 98 d8
q 988 515 1027 522 1045 505 65 8e d8
q 1042 518 1078 530 1095 515 60 8a d8
q 1092 530 1128 545 1172 523 58 8a d4
p b6 988 515 1028 480 1060 492 1100 495 1172 523 1128 545 1092 528 1078 530 1042 515 1027 522
p b6 1200 548 1360 468 1408 482 1370 507 1348 505 1275 545 1222 552
p 88 1200 545 1222 552 1222 620 1200 612
p a8 1222 552 1275 540 1275 605 1222 618
p 84 1272 545 1281 540 1281 610 1272 608
p cc 1281 540 1348 507 1348 575 1281 610
p 86 1348 505 1370 507 1370 575 1348 575
p d0 1370 507 1408 482 1408 545 1370 575
q 1405 565 1432 572 1465 560 70 90 c4
q 1465 572 1490 585 1540 560 62 8c b4
q 1150 690 1185 715 1230 695 40 94 bc
q 1231 675 1245 682 1327 645 30 7c d2
p ec 1205 660 1212 650 1216 665
q 1250 735 1295 760 1322 695 20 7c c4
p 94 1237 750 1280 752 1320 790 1240 795
q 1317 760 1350 785 1390 765 40 98 dc
q 1240 795 1302 825 1340 808 52 7e a0
p 9e 1302 825 1360 825 1360 897 1302 893
q 1365 800 1388 805 1413 795 55 6c 7c
q 1393 752 1415 767 1452 745 28 94 c4
p 80 1255 870 1268 875 1268 885
p a8 1225 880 1268 878 1268 953 1225 950
p d8 1152 860 1180 840 1175 850
q 1152 870 1190 885 1230 860 50 8c dc
q 1005 768 1020 775 1030 770 40 90 d8
p b4 1033 768 1060 735 1110 740 1135 770 1098 800
q 1033 775 1098 800 1135 770 42 90 dc
q 997 812 1002 815 1027 808 60 90 b4
q 1100 865 1106 868 1122 862 48 8c b8
q 1423 678 1445 695 1480 680 35 90 b8
q 1440 710 1460 722 1530 688 28 98 d0
q 1550 605 1572 620 1625 580 45 90 cc
q 1560 625 1600 640 1685 602 52 8c d0
`};

define('model-scene','<style>:host{display:block;width:1418px;height:1170px;background:#bfbfbf;flex:none}svg{display:block}text{font-family:"Liberation Sans",sans-serif}</style><svg width="1418" height="1170" viewBox="619 264 1418 1170"></svg>',function(r){
  const G=c=>'#'+c+c+c,P=(f,a)=>`<path fill="${f}" d="M${a.join(' ')}Z"/>`;
  let s='';
  for(const o in CITY){
    s+=`<g transform="translate(${o}) scale(.33333)">`;
    CITY[o].trim().split('\n').forEach(l=>{
      const a=l.trim().split(' '),k=a.shift();
      if(k=='p'){s+=P(G(a.shift()),a);return;}
      if(k=='P'){s+=P(a.shift(),a);return;}
      const [x,y,u,v,w,z,h]=a.slice(0,7).map(Number);
      s+=P('#b6b6b6',[x,y,u,v,w,z,x+w-u,y+z-v]);
      s+=P(G(a[7]),[x,y,u,v,u,v+h,x,y+h]);
      s+=P(G(a[8]),[u,v,w,z,w,z+h*.93,u,v+h]);
    });
    s+='</g>';
  }
  s+=`<g fill="none" stroke="#333" stroke-width="1.200"><path d="M1957.800 274L2020.700 306L2016.300 376.700L1957.800 414.500L1899.300 376.700L1895.700 306ZM1895.700 306L1957.800 341.500L2020.700 306M1957.800 341.500V414.500"/></g>
  <g fill="#444" stroke="#444" stroke-width=".8" text-anchor="middle" font-size="17.500">
  <text transform="matrix(.98 -.48 .75 .48 1959 309)">Top</text>
  <text transform="matrix(.87 .44 0 1.100 1926.500 367)">Left</text>
  <text transform="matrix(.84 -.45 0 1.100 1989.500 366)">Front</text></g>
  <defs><linearGradient id="z"><stop stop-color="#1a1a90"/><stop offset=".4" stop-color="#5a6ae8"/><stop offset="1" stop-color="#1010a0"/></linearGradient></defs>
  <g stroke-linecap="round"><path d="M704 1348L670 1330" stroke="#2a8a24" stroke-width="8"/><path d="M703 1346L670 1328.500" stroke="#8fdd86" stroke-width="1.800"/>
  <path d="M704 1348L738 1330" stroke="#a81c1c" stroke-width="8"/><path d="M706 1346L736 1330" stroke="#f08a8a" stroke-width="1.800"/></g>
  <path d="M660 1324L673 1320Q679 1324 677 1330L668 1338Z" fill="#3d9a35"/><path d="M667 1337Q666 1327 675 1321Q678 1325 676 1331Z" fill="#2b7a26"/>
  <path d="M748 1324L734 1320Q729 1324 731 1330L742 1338Z" fill="#8c1414"/><path d="M741 1337Q742 1327 733 1321Q730 1325 732 1331Z" fill="#6e0d0d"/>
  <path d="M699.500 1312H708.500V1351Q704 1354 699.500 1351Z" fill="url(#z)"/><path d="M704 1298L714 1311Q704 1319 694 1311Z" fill="url(#z)"/>
  <g text-anchor="middle" font-size="22"><text x="704" y="1297.500" fill="#2a3af0">Z</text><text x="652.500" y="1326.500" fill="#44a63c" font-size="21" textLength="11" lengthAdjust="spacingAndGlyphs">Y</text><text x="755.500" y="1326.500" fill="#c22020" font-size="21" textLength="12" lengthAdjust="spacingAndGlyphs">X</text></g>`;
  r.querySelector('svg').innerHTML=s;
});

define('document-view',`<style>
:host{display:flex;flex-direction:column;width:1418px;margin-left:14px;flex:none}
.bar{height:34px;padding-left:2px;flex:none}
.tab{width:155px;height:32px;box-sizing:border-box;border:1.500px solid #ccc;border-radius:4px 4px 0 0;display:flex;align-items:center;padding-left:10px;gap:8px;background:#fdfdfd;color:#333;margin-top:-1px}
.tab ui-text{padding-top:2px}
</style><div class="bar"><div class="tab"><svg width="15" height="15" stroke="#34507a" stroke-width="3.600" stroke-linecap="round"><path d="M2 2L13 13M13 2L2 13"/></svg><ui-text w="117">geo_to_bim.ifc</ui-text></div></div><model-scene></model-scene>`);

define('ifc-app',`<style>
:host{display:flex;flex-direction:column;width:2560px;height:1440px;box-sizing:border-box;border:2px solid #34507a;border-right-width:1px;background:#fff;overflow:hidden}
.main{display:flex;margin-top:3px;height:1208px;flex:none;padding-left:1px}
properties-panel{margin-left:12px}
</style><title-bar></title-bar><menu-tabs></menu-tabs><ribbon-bar></ribbon-bar>
<div class="main"><object-explorer></object-explorer><document-view></document-view><properties-panel></properties-panel></div>`);

/* Track every measured run once all elements are laid out */
for(const e of pending){
  const w=+e.getAttribute('w');if(!w)continue;
  const range=document.createRange();range.selectNodeContents(e);
  const n=range.getBoundingClientRect().width,len=e.textContent.length;
  if(n&&len>1){
    e.style.letterSpacing=((w-n)/len).toFixed(3)+'px';
    if(!e.classList.contains('t'))e.style.width=w+'px';
  }
}
</script>
</body>
</html>
